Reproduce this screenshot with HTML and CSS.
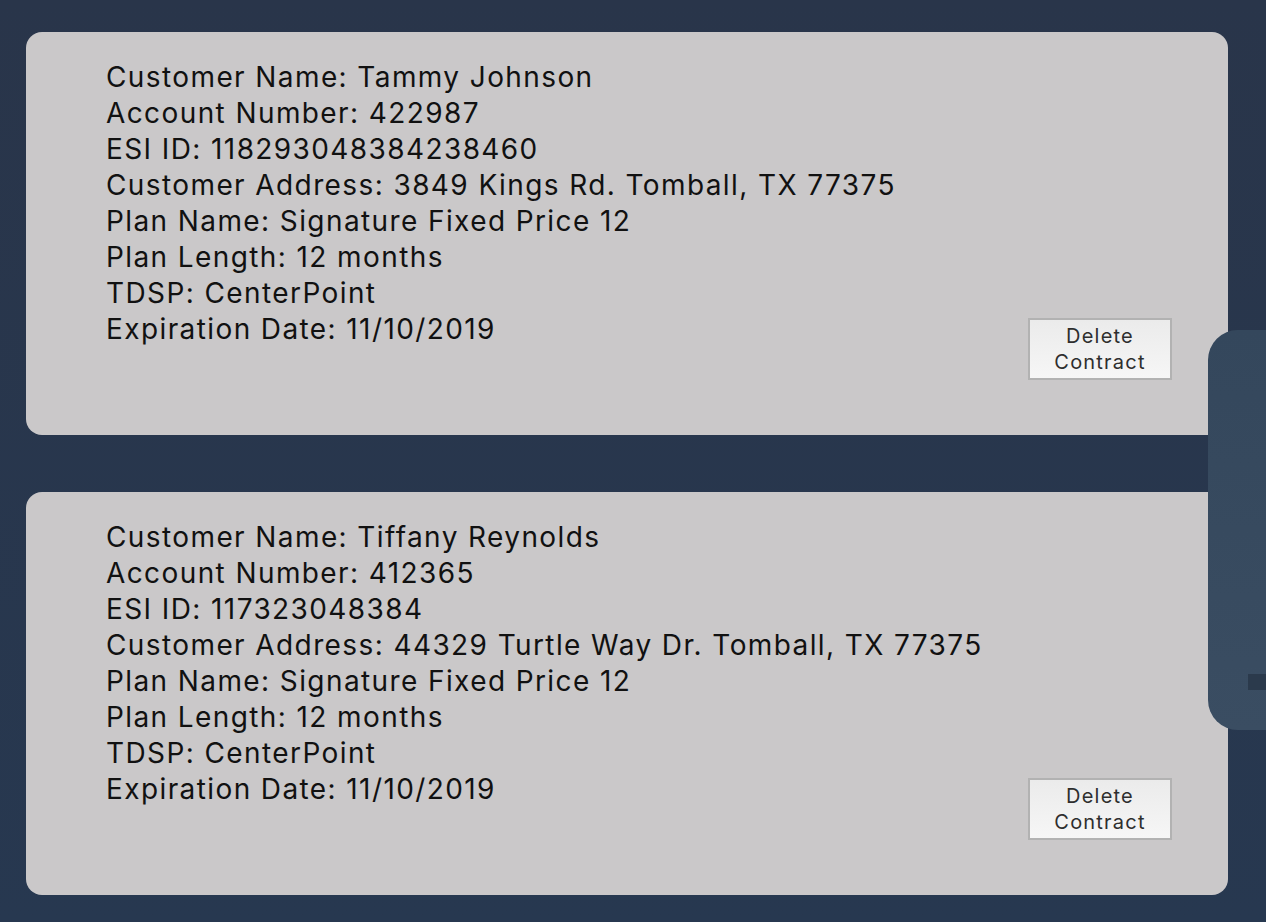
FILE: index.html
```html
<!DOCTYPE html>
<html>
<head>
<meta charset="utf-8">
<link rel="stylesheet" href="styles.css">
</head>
<body>
<main class="list">
  <section class="card">
    <div class="info">
      <div>Customer Name: Tammy Johnson</div>
      <div>Account Number: 422987</div>
      <div>ESI ID: 118293048384238460</div>
      <div>Customer Address: 3849 Kings Rd. Tomball, TX 77375</div>
      <div>Plan Name: Signature Fixed Price 12</div>
      <div>Plan Length: 12 months</div>
      <div>TDSP: CenterPoint</div>
      <div>Expiration Date: 11/10/2019</div>
    </div>
    <button class="delete">Delete<br>Contract</button>
  </section>
  <section class="card">
    <div class="info">
      <div>Customer Name: Tiffany Reynolds</div>
      <div>Account Number: 412365</div>
      <div>ESI ID: 117323048384</div>
      <div>Customer Address: 44329 Turtle Way Dr. Tomball, TX 77375</div>
      <div>Plan Name: Signature Fixed Price 12</div>
      <div>Plan Length: 12 months</div>
      <div>TDSP: CenterPoint</div>
      <div>Expiration Date: 11/10/2019</div>
    </div>
    <button class="delete">Delete<br>Contract</button>
  </section>
</main>
<aside class="side-panel"><span class="side-mark"></span></aside>
</body>
</html>
```
FILE: styles.css
```css
html, body {
  margin: 0;
  padding: 0;
}
body {
  background: linear-gradient(#29354a, #273850);
  min-height: 922px;
  overflow: hidden;
  font-family: Inter, "Liberation Sans", sans-serif;
  position: relative;
}
.list {
  display: flex;
  flex-direction: column;
  gap: 57px;
  padding: 32px 38px 0 26px;
}
.card {
  background: #cac8c9;
  border-radius: 16px;
  min-height: 403px;
  box-sizing: border-box;
  padding: 27px 56px 55px 80px;
  display: flex;
  justify-content: space-between;
  align-items: flex-end;
}
.info {
  align-self: flex-start;
  font-size: 28px;
  line-height: 36px;
  letter-spacing: 1.4px;
  color: #111;
}
.delete {
  width: 144px;
  height: 62px;
  box-sizing: border-box;
  border: 2px solid #b2b2b2;
  background: linear-gradient(#ebebeb, #f6f6f6);
  font-family: Inter, "Liberation Sans", sans-serif;
  font-size: 20px;
  line-height: 26px;
  letter-spacing: 1.2px;
  color: #2e2e2e;
  padding: 0;
  border-radius: 0;
}
.side-panel {
  position: absolute;
  left: 1208px;
  top: 330px;
  width: 100px;
  height: 400px;
  border-radius: 30px;
  background: linear-gradient(#34475c, #3a4d62);
}
.side-mark {
  position: absolute;
  left: 40px;
  top: 344px;
  width: 20px;
  height: 16px;
  background: #2b3a4c;
}
```
